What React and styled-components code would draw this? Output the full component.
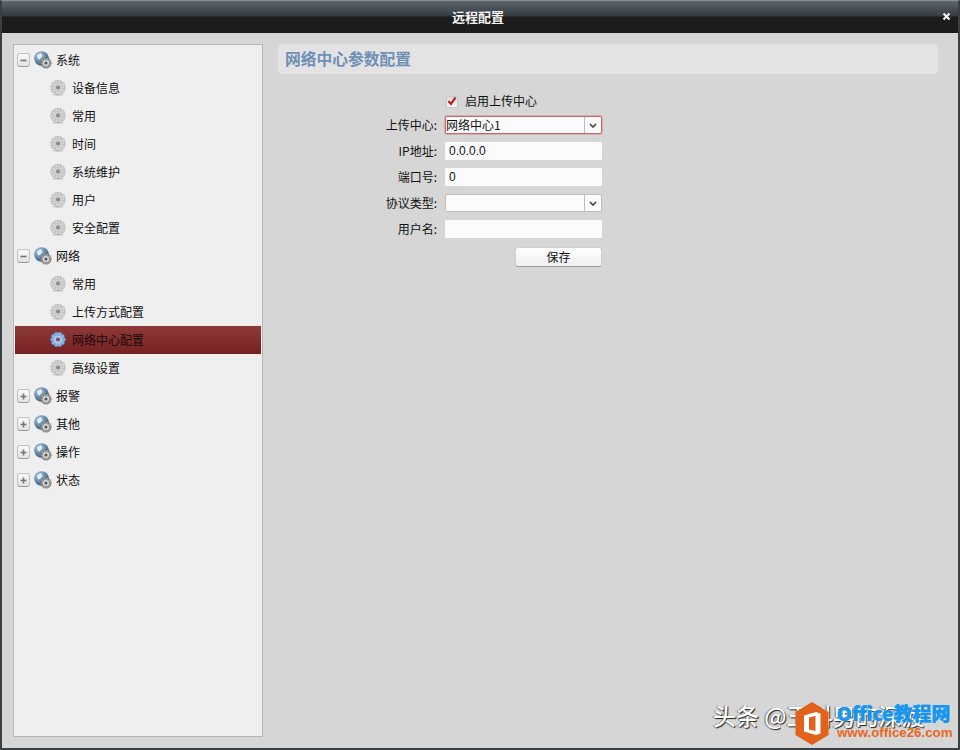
import React from "react"
import styled, { createGlobalStyle } from "styled-components"

const GlobalStyle = createGlobalStyle`
    html, body {
        margin: 0;
        padding: 0;
        background: #d6d6d6;
    }
    body {
        font-family: "Noto Sans CJK SC", "Liberation Sans", sans-serif;
        font-size: 12px;
        color: #111;
    }
`

const Window = styled.div`
    position: relative;
    box-sizing: border-box;
    width: 960px;
    height: 750px;
    display: flex;
    flex-direction: column;
    background: #d6d6d6;
    border: 2px solid #3a3f44;
    border-top: 1px solid #8a8f94;
    overflow: hidden;
`

const TitleBar = styled.div`
    height: 32px;
    flex: none;
    display: flex;
    align-items: center;
    justify-content: center;
    position: relative;
    padding: 0 4px 2px 0;
    box-sizing: border-box;
    background: linear-gradient(to bottom, #5d666e 0, #343a40 15px, #1c1c1c 16px, #1c1c1c 100%);
    color: #f4f4f4;
    font-size: 13px;
    font-weight: 700;
`

const CloseButton = styled.span`
    position: absolute;
    right: 7px;
    top: 11px;
    width: 9px;
    height: 9px;
    display: flex;
`

const Body = styled.div`
    flex: 1;
    display: flex;
    gap: 15px;
    padding: 11px 20px 11px 11px;
    min-height: 0;
`

const Sidebar = styled.div`
    box-sizing: border-box;
    width: 250px;
    flex: none;
    background: #efefef;
    border: 1px solid #b6b6b6;
    padding: 1px;
`

const Row = styled.div`
    height: 28px;
    display: flex;
    align-items: center;
    padding-left: ${(props) => (props.$child ? "35px" : "2px")};
    gap: ${(props) => (props.$child ? "6px" : "4px")};
    background: ${(props) => (props.$active ? "linear-gradient(to bottom, #8f3a3a, #752121)" : "transparent")};
    color: ${(props) => (props.$active ? "#1a0808" : "#111")};
`

const RowText = styled.span`
    padding-bottom: 2px;
`

const Toggle = styled.span`
    box-sizing: border-box;
    width: 13px;
    height: 14px;
    border: 1px solid #c2c2c2;
    border-bottom-color: #9a9a9a;
    border-radius: 3px;
    background: linear-gradient(to bottom, #fbfbfb, #e2e2e2);
    display: flex;
    align-items: center;
    justify-content: center;
    color: #777;
`

const Main = styled.div`
    flex: 1;
    display: flex;
    flex-direction: column;
`

const PanelTitle = styled.div`
    box-sizing: border-box;
    height: 30px;
    flex: none;
    display: flex;
    align-items: center;
    padding: 0 0 2px 7px;
    border-radius: 4px;
    background: #e3e3e3;
    color: #6f8fb6;
    font-size: 15.75px;
    font-weight: 700;
`

const Form = styled.div`
    display: grid;
    grid-template-columns: 159px 157px;
    column-gap: 8px;
    row-gap: 8px;
    margin-top: 18px;
    align-items: center;
`

const CheckLine = styled.label`
    grid-column: 2;
    height: 16px;
    display: flex;
    align-items: center;
    gap: 7px;
`

const CheckText = styled.span`
    margin-top: 1px;
`

const CheckBox = styled.span`
    box-sizing: border-box;
    width: 12px;
    height: 12px;
    margin-left: 1px;
    margin-top: 3px;
    background: linear-gradient(to bottom, #dcdcdc, #fafafa);
    border: 1px solid #c8c8c8;
    border-radius: 2px;
    position: relative;
`

const CheckMark = styled.svg`
    position: absolute;
    left: 0;
    top: -1px;
`

const Label = styled.span`
    text-align: right;
    line-height: 18px;
    padding-bottom: 2px;
    height: 16px;
`

const Field = styled.div`
    box-sizing: border-box;
    height: 18px;
    display: flex;
    align-items: center;
    padding-left: 4px;
    background: #fbfbfb;
    border-radius: 1px;
    font-family: "Liberation Sans", "Noto Sans CJK SC", sans-serif;
    font-size: 12px;
`

const Select = styled.div`
    box-sizing: border-box;
    height: 18px;
    display: flex;
    align-items: center;
    background: #fbfbfb;
    border: 1px solid ${(props) => (props.$focused ? "#cf6469" : "#bdbdbd")};
    box-shadow: ${(props) => (props.$focused ? "0 0 0 1px rgba(207, 100, 105, 0.35)" : "none")};
    border-radius: 2px;
`

const SelectValue = styled.span`
    flex: 1;
    padding-bottom: 2px;
    font-family: "Noto Sans CJK SC", sans-serif;
`

const Arrow = styled.span`
    box-sizing: border-box;
    width: 17px;
    height: 100%;
    flex: none;
    display: flex;
    align-items: center;
    justify-content: center;
    border-left: 1px solid #bdbdbd;
    color: #444;
`

const SaveButton = styled.button`
    grid-column: 2;
    justify-self: end;
    box-sizing: border-box;
    width: 87px;
    height: 20px;
    margin-top: 1px;
    padding: 0 0 2px;
    border: 1px solid #d0d0d0;
    border-bottom-color: #9a9a9a;
    border-radius: 3px;
    background: linear-gradient(to bottom, #ffffff, #efefef);
    font: inherit;
    color: #111;
`

const Watermark = styled.div`
    position: absolute;
    right: 0;
    bottom: 0;
    width: 250px;
    height: 60px;
`

const WatermarkText = styled.span`
    position: absolute;
    left: 5px;
    top: 10px;
    font-size: 23px;
    font-weight: 500;
    white-space: nowrap;
    color: #fff;
    text-shadow: 1px 1px 1px #222, -1px 0 1px #777;
`

const LogoMark = styled.svg`
    position: absolute;
    left: 87px;
    top: 14px;
`

const BrandName = styled.span`
    position: absolute;
    left: 129px;
    top: 14px;
    font-size: 19px;
    font-weight: 900;
    line-height: 22px;
    white-space: nowrap;
    color: #1b95ec;
    text-shadow: 0 0 1px #1b95ec, 0 0 2px #ffffff;
`

const BrandUrl = styled.span`
    position: absolute;
    left: 129px;
    top: 37px;
    font-family: "Liberation Sans", sans-serif;
    font-size: 13.3px;
    font-weight: 700;
    line-height: 16px;
    white-space: nowrap;
    color: #e8671c;
`

// ring of lobes, used for the leaf rows and on the corner of the globe
const Gear = ({ blue, x = 8, y = 7.5, r = 7.5, dark }) => {
    const lobes = [0, 36, 72, 108, 144, 180, 216, 252, 288, 324]
    const fill = blue ? "#86b6e2" : dark ? "#a8a8a8" : "#d6d6d6"
    const edge = blue ? "#5a90c4" : dark ? "#555" : "#909090"
    return (
        <g>
            {lobes.map((deg) => {
                const a = (deg * Math.PI) / 180
                return <circle key={deg} cx={x + Math.cos(a) * r * 0.72} cy={y + Math.sin(a) * r * 0.72} r={r * 0.28} fill={fill} stroke={edge} strokeWidth="0.4" />
            })}
            <circle cx={x} cy={y} r={r * 0.55} fill={blue ? "#a9cdee" : dark ? "#dcdcdc" : "#cfcfcf"} />
            <circle cx={x} cy={y} r={r * 0.28} fill={blue ? "#8a4a66" : dark ? "#555" : "#8a8a8a"} />
        </g>
    )
}

const LeafIcon = ({ blue }) => (
    <svg width="16" height="16" viewBox="0 0 16 16">
        <ellipse cx="8" cy="14.8" rx="6" ry="1.1" fill="#000" opacity="0.12" />
        <Gear blue={blue} />
    </svg>
)

const GroupIcon = () => (
    <svg width="18" height="18" viewBox="0 0 18 18">
        <defs>
            <radialGradient id="globe" cx="0.35" cy="0.3" r="0.8">
                <stop offset="0" stopColor="#b4cbe0" />
                <stop offset="0.55" stopColor="#5f86a8" />
                <stop offset="1" stopColor="#2f4a64" />
            </radialGradient>
        </defs>
        <circle cx="7.5" cy="7.5" r="7.3" fill="url(#globe)" />
        <path d="M3 4.5 L7 2 L8.5 5 L5 8.5 L3.5 7 Z" fill="#e4edf5" />
        <Gear x={12} y={12} r={5.5} dark />
    </svg>
)

const ToggleIcon = ({ open }) => (
    <svg width="7" height="7" viewBox="0 0 7 7">
        <path d={open ? "M0.5 3.5 H6.5" : "M0.5 3.5 H6.5 M3.5 0.5 V6.5"} stroke="currentColor" strokeWidth="1.7" fill="none" />
    </svg>
)

const Chevron = () => (
    <svg width="8" height="5" viewBox="0 0 8 5">
        <path d="M1 1 L4 4 L7 1" stroke="currentColor" strokeWidth="1.7" fill="none" />
    </svg>
)

const tree = [
    { name: "系统", open: true, items: ["设备信息", "常用", "时间", "系统维护", "用户", "安全配置"] },
    { name: "网络", open: true, items: ["常用", "上传方式配置", "网络中心配置", "高级设置"] },
    { name: "报警" },
    { name: "其他" },
    { name: "操作" },
    { name: "状态" },
]

const App = () => (
    <>
        <GlobalStyle />
        <Window>
            <TitleBar>
                远程配置
                <CloseButton>
                    <svg width="9" height="9" viewBox="0 0 9 9">
                        <path d="M1.5 1.5 L7.5 7.5 M7.5 1.5 L1.5 7.5" stroke="#f2f2f2" strokeWidth="2.2" />
                    </svg>
                </CloseButton>
            </TitleBar>
            <Body>
                <Sidebar>
                    {tree.map((group) => (
                        <React.Fragment key={group.name}>
                            <Row>
                                <Toggle><ToggleIcon open={group.open} /></Toggle>
                                <GroupIcon />
                                <RowText>{group.name}</RowText>
                            </Row>
                            {(group.items || []).map((item) => (
                                <Row $child key={item} $active={item === "网络中心配置"}>
                                    <LeafIcon blue={item === "网络中心配置"} />
                                    <RowText>{item}</RowText>
                                </Row>
                            ))}
                        </React.Fragment>
                    ))}
                </Sidebar>
                <Main>
                    <PanelTitle>网络中心参数配置</PanelTitle>
                    <Form>
                        <CheckLine>
                            <CheckBox>
                                <CheckMark width="10" height="10" viewBox="0 0 10 10">
                                    <path d="M1.5 5 L4 8 L8.5 1.5" stroke="#b3272d" strokeWidth="2.2" fill="none" />
                                </CheckMark>
                            </CheckBox>
                            <CheckText>启用上传中心</CheckText>
                        </CheckLine>
                        <Label>上传中心:</Label>
                        <Select $focused>
                            <SelectValue>网络中心1</SelectValue>
                            <Arrow><Chevron /></Arrow>
                        </Select>
                        <Label>IP地址:</Label>
                        <Field>0.0.0.0</Field>
                        <Label>端口号:</Label>
                        <Field>0</Field>
                        <Label>协议类型:</Label>
                        <Select>
                            <SelectValue />
                            <Arrow><Chevron /></Arrow>
                        </Select>
                        <Label>用户名:</Label>
                        <Field />
                        <SaveButton>保存</SaveButton>
                    </Form>
                </Main>
            </Body>
            <Watermark>
                <WatermarkText>头条 @王科男的深渡</WatermarkText>
                <LogoMark width="34" height="43" viewBox="0 0 34 43">
                    <path d="M17 0 L33.5 10 L33.5 33 L17 43 L0.5 33 L0.5 10 Z" fill="#e2611b" />
                    <path fillRule="evenodd" d="M9 13.5 L21 10 L25.5 11.5 L25.5 31.5 L21 33 L9 29.5 Z M14 15.5 L14 27.5 L20.5 29 L20.5 14 Z" fill="#fff" />
                </LogoMark>
                <BrandName>Office教程网</BrandName>
                <BrandUrl>www.office26.com</BrandUrl>
            </Watermark>
        </Window>
    </>
)

export default App
